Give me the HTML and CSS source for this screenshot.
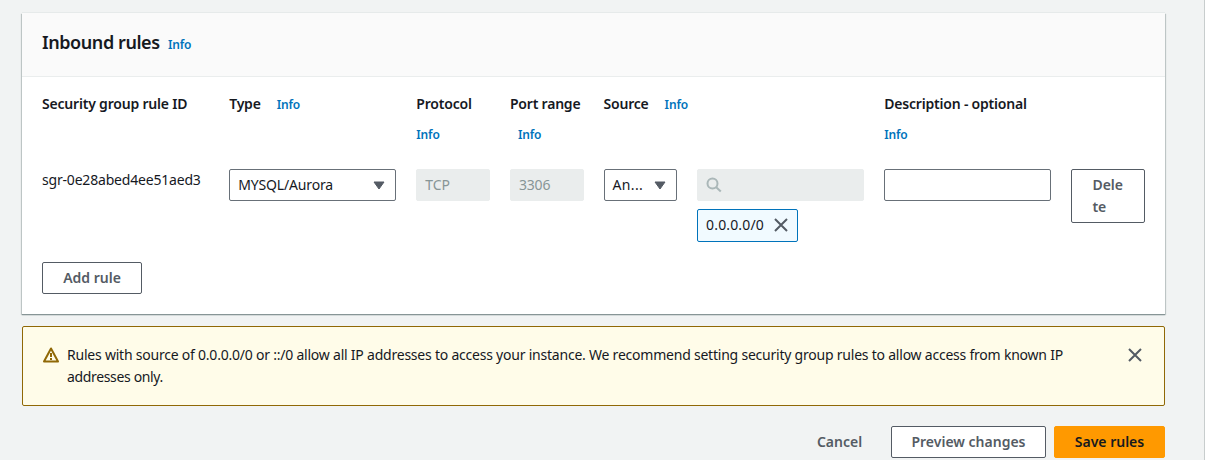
FILE: index.html
```html
<!DOCTYPE html>
<html lang="en">
<head>
<meta charset="utf-8">
<title>Edit inbound rules</title>
<link rel="stylesheet" href="styles.css">
</head>
<body>
<main class="page">
  <section class="card">
    <header class="card-header"><h2 class="title">Inbound rules</h2><a class="info">Info</a></header>
    <div class="card-body">
      <div class="grid labels">
        <div class="span2"><span class="label">Security group rule ID</span></div>
        <div class="span2"><span class="label">Type</span><a class="info gap">Info</a></div>
        <div><span class="label">Protocol</span><a class="info below">Info</a></div>
        <div><span class="label">Port range</span><a class="info below indent">Info</a></div>
        <div class="span3"><span class="label">Source</span><a class="info gap">Info</a></div>
        <div class="span2"><span class="label">Description - optional</span><a class="info below">Info</a></div>
      </div>
      <div class="grid fields">
        <div class="span2 rule-id">sgr-0e28abed4ee51aed3</div>
        <div class="span2 control"><span>MYSQL/Aurora</span><svg class="caret" width="12" height="9" viewBox="0 0 12 9"><path d="M1 1h10L6 8z"/></svg></div>
        <div class="control disabled"><span>TCP</span></div>
        <div class="control disabled"><span>3306</span></div>
        <div class="control"><span class="short">An...</span><svg class="caret" width="12" height="9" viewBox="0 0 12 9"><path d="M1 1h10L6 8z"/></svg></div>
        <div class="span2">
          <div class="control disabled"><svg class="search" width="16" height="16" viewBox="0 0 16 16"><circle cx="6.5" cy="6.5" r="5"/><path d="M10.2 10.2l4.6 4.3"/></svg></div>
          <div class="token"><span class="token-text">0.0.0.0/0</span><svg class="close" width="16" height="16" viewBox="0 0 16 16"><path d="M2 2l12 12M14 2L2 14"/></svg></div>
        </div>
        <div class="span2 control"></div>
        <button class="btn delete">Dele<br>te</button>
      </div>
      <button class="btn add">Add rule</button>
    </div>
  </section>
  <section class="alert">
    <svg class="warning" width="18" height="18" viewBox="0 0 18 18"><path d="M9 2.5L16 15.5H2z"/><path d="M9 7v4M9 12v2"/></svg>
    <p class="message">Rules with source of 0.0.0.0/0 or ::/0 allow all IP addresses to access your instance. We recommend setting security group rules to allow access from known IP<br><span class="second-line">addresses only.</span></p>
    <svg class="close" width="16" height="16" viewBox="0 0 16 16"><path d="M2 2l12 12M14 2L2 14"/></svg>
  </section>
  <footer class="actions">
    <button class="btn link">Cancel</button>
    <button class="btn preview">Preview changes</button>
    <button class="btn primary">Save rules</button>
  </footer>
</main>
</body>
</html>
```
FILE: styles.css
```css
* { box-sizing: border-box; }
body { margin: 0; height: 460px; overflow: hidden; background: #fff; color: #16191f; font: 14px/22px "Noto Sans", "Open Sans", sans-serif; }
.page { width: 1205px; height: 460px; padding: 13px 39px 0 22px; background: #f1f3f3; border-right: 1px solid #c8cdcd; overflow: hidden; }
.card { height: 301px; background: #fff; box-shadow: 0 1px 1px #879596, 1px 1px 1px #c8cfcf, -1px 1px 1px #c8cfcf, 0 -1px 0 #e6eaea; }
.card-header { display: flex; align-items: center; height: 64px; padding: 0 20px 5px; background: #fafafa; border-bottom: 1px solid #eaeded; }
.title { margin: 0; width: 118px; font-size: 18px; font-weight: 600; letter-spacing: -.43px; white-space: nowrap; }
.info { color: #0073bb; font-size: 12px; font-weight: 600; letter-spacing: -.15px; }
.card-header .info { margin: 5px 0 0 8px; }
.card-body { padding: 16px 20px 0; }
.grid { display: grid; grid-template-columns: repeat(12, minmax(0, 1fr)); column-gap: 20px; }
.span2 { grid-column: span 2; }
.span3 { grid-column: span 3; }
.labels { height: 76px; align-items: start; }
.label { font-weight: 600; letter-spacing: -.2px; white-space: nowrap; }
.gap { margin-left: 16px; }
.below { display: block; margin-top: 9px; }
.indent { margin-left: 8px; }
.fields { height: 93px; align-items: start; }
.rule-id { letter-spacing: -.19px; }
.control { display: flex; align-items: center; justify-content: space-between; height: 32px; padding: 0 10px 0 8px; background: #fff; border: 1px solid #687078; border-radius: 2px; letter-spacing: -.15px; white-space: nowrap; }
.control.disabled { background: #eaeded; border-color: #eaeded; color: #879596; }
.short { letter-spacing: .35px; }
.caret { fill: #545b64; stroke: #545b64; stroke-width: 1; stroke-linejoin: round; }
.search { fill: none; stroke: #aab7b8; stroke-width: 2; }
.close { flex: none; fill: none; stroke: #545b64; stroke-width: 2; }
.token { display: flex; align-items: center; justify-content: space-between; width: 101px; height: 33px; margin-top: 8px; padding: 0 8px 1px; background: #f1faff; border: 1px solid #0073bb; border-radius: 2px; }
.token-text { letter-spacing: .15px; }
.btn { height: 32px; padding: 0; background: #fff; border: 1px solid #545b64; border-radius: 2px; color: #545b64; font: 600 14px/22px "Noto Sans", "Open Sans", sans-serif; letter-spacing: 0; white-space: nowrap; }
.delete { height: 54px; padding: 0 0 0 20px; text-align: left; }
.add { width: 100px; }
.alert { display: flex; align-items: flex-start; height: 80px; margin-top: 12px; padding: 17px 21px 0 20px; background: #fffce9; border: 1px solid #906806; border-radius: 2px; }
.warning { flex: none; margin: 2px 7px 0 -1px; fill: none; stroke: #906806; stroke-width: 2; stroke-linejoin: round; }
.message { flex: 1; margin: 0; letter-spacing: -.222px; white-space: nowrap; }
.second-line { letter-spacing: -.35px; }
.alert .close { margin-top: 3px; }
.actions { display: flex; justify-content: flex-end; gap: 8px; margin-top: 20px; }
.link { width: 87px; background: none; border-color: transparent; }
.preview { width: 155px; }
.primary { width: 111px; background: #f90; border-color: #f90; color: #16191f; }
```
